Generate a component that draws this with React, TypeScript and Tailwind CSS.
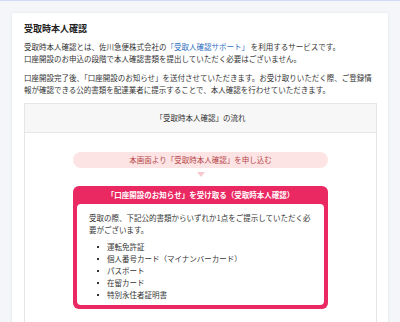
const jp = { fontFamily: '"Noto Sans CJK JP", "Noto Sans", sans-serif' }

const documents = [
    "運転免許証",
    "個人番号カード（マイナンバーカード）",
    "パスポート",
    "在留カード",
    "特別永住者証明書",
]

export default function App() {
    return (
        <div
            style={jp}
            className="w-[400px] h-[322px] overflow-hidden bg-[#f5f6fa] border-t border-[#d3d8f4] text-[#333]"
        >
            <div className="mx-[12px] mt-[12px] bg-white shadow-[0_0_3px_rgba(0,0,0,0.08)] pl-[12px] pr-[11px] pt-[10px] pb-[20px]">
                <h2 className="text-[9px] leading-[12px] font-bold text-[#222]">受取時本人確認</h2>

                <p className="mt-[6px] text-[7.5px] leading-[11.5px]">
                    受取時本人確認とは、佐川急便株式会社の
                    <span className="text-[#2f6fc0]">「受取人確認サポート」</span>
                    {" "}を利用するサービスです。
                    <br />
                    口座開設のお申込の段階で本人確認書類を提出していただく必要はございません。
                </p>
                <p className="mt-[8px] text-[7.5px] leading-[11.5px]">
                    口座開設完了後、「口座開設のお知らせ」を送付させていただきます。お受け取りいただく際、ご登録情
                    <br />
                    報が確認できる公的書類を配達業者に提示することで、本人確認を行わせていただきます。
                </p>

                <div className="mt-[8px] border border-[#e6e6e6]">
                    <div className="h-[29px] flex items-center justify-center bg-[#f7f7f7] border-b border-[#e6e6e6] text-[7.5px]">
                        「受取時本人確認」の流れ
                    </div>
                    <div className="flex flex-col items-center pt-[19px] pb-[20px]">
                        <div className="w-[255px] h-[16px] rounded-full bg-[#fde4e4] flex items-center justify-center text-[7.5px] text-[#b5474a]">
                            本画面より「受取時本人確認」を申し込む
                        </div>
                        <div className="mt-[4px] w-0 h-0 border-l-[4px] border-r-[4px] border-t-[5px] border-l-transparent border-r-transparent border-t-[#f7c9cc]" />
                        <div className="mt-[9px] w-[255px] rounded-[6px] bg-[#ea2862] px-[4px] pb-[4px]">
                            <div className="h-[18px] flex items-center justify-center text-white font-bold text-[7.5px]">
                                「口座開設のお知らせ」を受け取る（受取時本人確認）
                            </div>
                            <div className="bg-white rounded-[4px] pl-[12px] pr-[12px] pt-[8px] pb-[4px] text-[7.5px] leading-[12px]">
                                <p>受取の際、下記公的書類からいずれか1点をご提示していただく必要がございます。</p>
                                <ul className="mt-[5px]">
                                    {documents.map((doc) => (
                                        <li key={doc} className="flex items-center h-[12px]">
                                            <span className="ml-[8px] mr-[8px] w-[2px] h-[2px] bg-[#333]" />
                                            {doc}
                                        </li>
                                    ))}
                                </ul>
                            </div>
                        </div>
                    </div>
                </div>
            </div>
        </div>
    )
}
